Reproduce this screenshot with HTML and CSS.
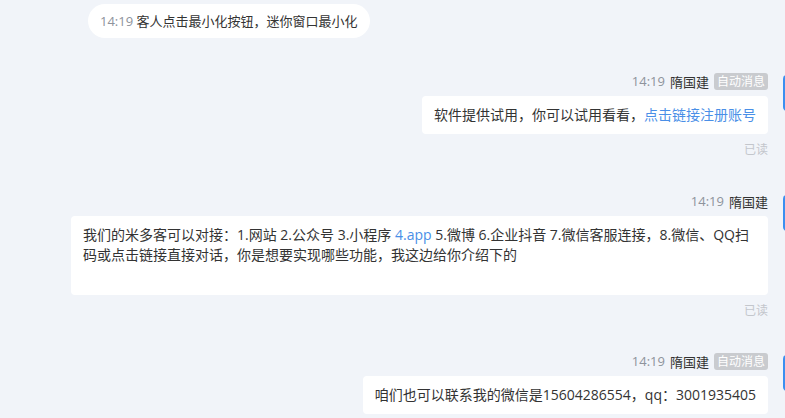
FILE: index.html
```html
<!DOCTYPE html>
<html>
  <head>
    <title>会话记录</title>
    <meta name="viewport" content="width=device-width, initial-scale=1.0" />
    <link rel="stylesheet" href="styles.css">
  </head>
  <body>
    <div class="chat">
      <div class="system-row">
        <div class="system-pill"><span class="time">14:19</span> 客人点击最小化按钮，迷你窗口最小化</div>
      </div>

      <div class="msg">
        <div class="msg-body">
          <div class="msg-head">
            <span class="time">14:19</span>
            <span class="name">隋国建</span>
            <span class="badge">自动消息</span>
          </div>
          <div class="bubble">软件提供试用，你可以试用看看，<a class="link" href="#">点击链接注册账号</a></div>
          <div class="read">已读</div>
        </div>
        <div class="avatar"></div>
      </div>

      <div class="msg msg-wide">
        <div class="msg-body">
          <div class="msg-head">
            <span class="time">14:19</span>
            <span class="name">隋国建</span>
          </div>
          <div class="bubble bubble-tall">我们的米多客可以对接：1.网站 2.公众号 3.小程序 <a class="link" href="#">4.app</a> 5.微博 6.企业抖音 7.微信客服连接，8.微信、QQ扫码或点击链接直接对话，你是想要实现哪些功能，我这边给你介绍下的</div>
          <div class="read">已读</div>
        </div>
        <div class="avatar"></div>
      </div>

      <div class="msg msg-last">
        <div class="msg-body">
          <div class="msg-head">
            <span class="time">14:19</span>
            <span class="name">隋国建</span>
            <span class="badge">自动消息</span>
          </div>
          <div class="bubble">咱们也可以联系我的微信是15604286554，qq：3001935405</div>
        </div>
        <div class="avatar"></div>
      </div>
    </div>
  </body>
</html>
```

FILE: styles.css
```css
html,
body {
  margin: 0;
  padding: 0;
  overflow: hidden;
}
body {
  font-family: "Open Sans", "Noto Sans CJK SC", "Microsoft YaHei", sans-serif;
  background: #f1f4f9;
  color: #333;
  font-size: 14px;
  width: 785px;
  height: 418px;
}
.chat {
  width: 819px;
  padding-top: 4px;
}
.system-row {
  padding-left: 88px;
}
.system-pill {
  display: inline-block;
  background: #fff;
  border-radius: 17px;
  padding: 0 12px;
  height: 34px;
  line-height: 34px;
  font-size: 13px;
}
.time {
  color: #8e939c;
}
.msg {
  display: flex;
  justify-content: flex-end;
  gap: 15px;
  margin-top: 34px;
}
.msg-wide {
  margin-top: 34px;
  padding-left: 71px;
}
.msg-last {
  margin-top: 33px;
}
.msg-body {
  display: flex;
  flex-direction: column;
  align-items: flex-end;
}
.msg-wide .msg-body {
  flex: 1;
}
.msg-head {
  display: flex;
  align-items: center;
  gap: 5px;
  height: 18px;
  font-size: 13px;
  margin-bottom: 6px;
}
.name {
  color: #333;
}
.badge {
  background: #c9cbcf;
  color: #fff;
  font-size: 12px;
  line-height: 17px;
  padding: 0 3px;
  border-radius: 3px;
}
.bubble {
  background: #fff;
  border-radius: 4px;
  padding: 9px 12px;
  line-height: 20px;
}
.msg-wide .bubble {
  align-self: stretch;
}
.bubble-tall {
  padding-bottom: 30px;
}
.link {
  color: #4a8fe7;
  text-decoration: none;
}
.read {
  color: #c3c6cc;
  font-size: 12px;
  margin-top: 8px;
  line-height: 16px;
}
.avatar {
  width: 36px;
  height: 36px;
  flex: none;
  margin-top: 3px;
  border-radius: 4px;
  background: #3b8ff0;
}
```
